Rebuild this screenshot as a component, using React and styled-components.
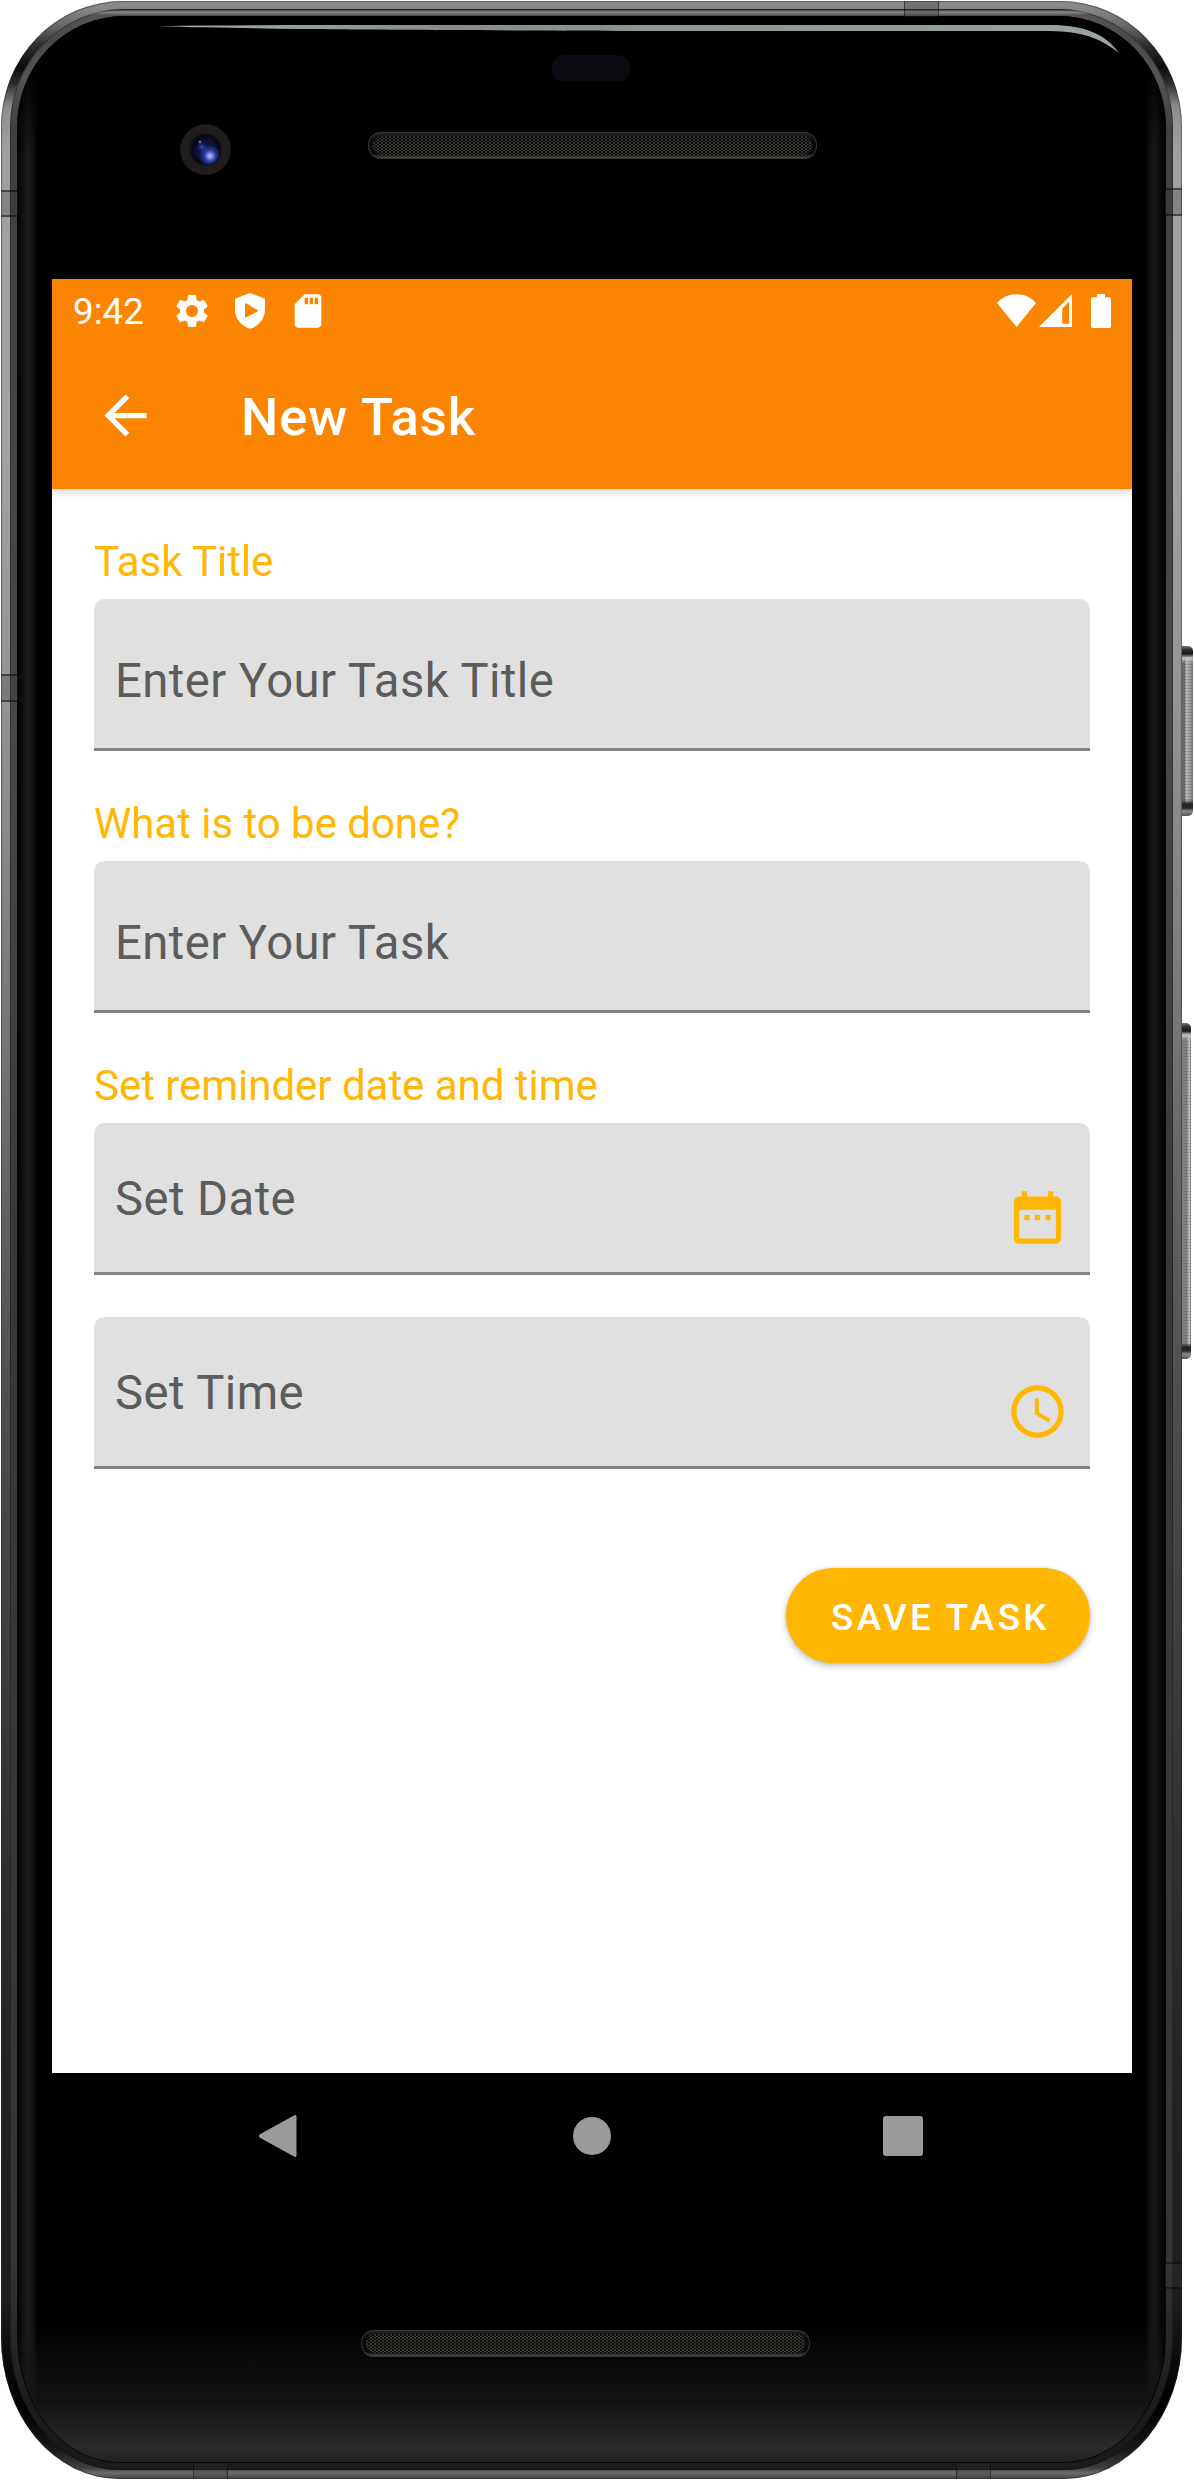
import React from "react";
import styled, { createGlobalStyle } from "styled-components";

const GlobalStyle = createGlobalStyle`
  html, body { margin: 0; padding: 0; background: #fff; }
  *, *::before, *::after { box-sizing: border-box; }
  body { font-family: Roboto, "Noto Sans", sans-serif; }
`;

const Stage = styled.div`
  position: relative;
  width: 1194px;
  height: 2480px;
  padding: 1px;
  overflow: hidden;
`;

/* Metal shell, lit from the top left */
const Shell = styled.div`
  position: relative;
  width: 1181px;
  height: 2478px;
  padding: 8px 9px 9px 9px;
  border-radius: 122px 122px 118px 118px / 126px 126px 142px 142px;
  background: linear-gradient(
    180deg,
    #8b8c8b 0,
    #858685 8px,
    #6a6a6a 24px,
    #2a2a2a 46px,
    #0c0c0c 66px,
    #2c2c2c 82px,
    #8e8e8e 106px,
    #a0a0a0 150px,
    #a3a3a3 420px,
    #949494 700px,
    #747474 1050px,
    #4d4d4d 1400px,
    #333 1800px,
    #222 2100px,
    #1d1d1d 2300px,
    #0a0a0a 2360px,
    #000 2410px,
    #1a1a1a 2450px,
    #404040 2467px,
    #6c6c6c 2472px,
    #4a4a4a 2477px
  );
  box-shadow: inset 0 0 1px 1px rgba(40, 44, 44, 0.5);
`;

/* Brushed inner rim between shell and glass */
const Rim = styled.div`
  height: 100%;
  padding: 7px 7px 7px 7px;
  border-radius: 114px 114px 109px 109px / 118px 118px 133px 133px;
  background: linear-gradient(
    180deg,
    #1c1c1c 0,
    #8a8a8a 3px,
    #555 6px,
    #4a4a4a 30px,
    #555 70px,
    #404040 120px,
    #484848 700px,
    #383838 1300px,
    #363636 1900px,
    #343434 2250px,
    #1c1c1c 2400px,
    #1b1b1b 2461px
  );
  box-shadow: inset 0 0 0 1px rgba(0, 0, 0, 0.3);
`;

const Glass = styled.div`
  display: flex;
  flex-direction: column;
  height: 100%;
  padding: 0 34px 0 35px;
  border-radius: 107px 107px 102px 102px / 111px 111px 126px 126px;
  background:
    linear-gradient(180deg, transparent 2310px, rgba(22, 22, 22, 0.9) 2385px, #2a2a2a 2432px, #222 2446px),
    linear-gradient(90deg, #000 0, #080808 3px, #1d1d1d 10px, #141414 15px, #000 21px, #000 calc(100% - 21px), #181818 calc(100% - 13px), #161616 calc(100% - 9px), #000 calc(100% - 2px));
  background-color: #000;
  box-shadow: inset 0 0 0 1px #050507;
  overflow: hidden;
`;

const TopBezel = styled.div`
  position: relative;
  height: 263px;
  flex: none;
  margin: 0 -35px;
  background: linear-gradient(180deg, #000 0 50px, transparent 140px);
`;

const BottomBezel = styled.div`
  display: flex;
  justify-content: center;
  padding-top: 131px;
  padding-right: 13px;
`;

const Highlight = styled.svg`
  position: absolute;
  left: 0;
  top: 0;
  pointer-events: none;
`;

const Sensor = styled.div`
  position: absolute;
  left: 535px;
  top: 39px;
  width: 78px;
  height: 27px;
  border-radius: 12px;
  background: #090b10;
`;

const Camera = styled.div`
  position: absolute;
  left: 163px;
  top: 108px;
  display: grid;
  place-items: center;
  width: 51px;
  height: 51px;
  border-radius: 50%;
  background: radial-gradient(circle, #100f11 0 15px, #201d1e 17px, #201e1e 24px, #141313 26px);
`;

const Lens = styled.div`
  width: 28px;
  height: 30px;
  border-radius: 50%;
  background:
    radial-gradient(circle at 18px 21px, #b3c2f5 0, #6c80dd 3px, rgba(50, 68, 190, 0.75) 6px, transparent 11px),
    radial-gradient(circle at 10px 12px, #3e5cc8 0, rgba(38, 60, 150, 0.6) 2px, transparent 5px),
    radial-gradient(circle at 8px 7px, #8ba0e8 0, transparent 2px),
    radial-gradient(circle, #10194c 0, #0c1239 9px, #05060f 15px);
`;

const Grille = styled.div`
  width: 449px;
  height: 27px;
  padding: 4px 5px;
  border-radius: 13px;
  background: linear-gradient(180deg, #272627, #0b0b0b 30%, #0b0b0b 80%, #575250);
  box-shadow: inset 0 0 0 1px #353333;
`;

const Mesh = styled.div`
  height: 100%;
  border-radius: 10px;
  background:
    radial-gradient(circle at 1px 1px, rgba(98, 92, 81, 0.65) 0 0.6px, transparent 1.1px) 0 0 / 4px 3px,
    radial-gradient(circle at 3px 2.5px, rgba(87, 82, 74, 0.65) 0 0.6px, transparent 1.1px) 0 0 / 4px 3px,
    #0b0a0a;
`;

const EarpieceSlot = styled.div`
  position: absolute;
  left: 351px;
  top: 116px;
`;

const Band = styled.span`
  position: absolute;
  ${(p) => p.$side}: 0;
  ${(p) => (p.$side === "left" || p.$side === "right"
    ? `top: ${p.$at}px; width: 17px; height: ${p.$size}px; border-width: 2px 0;`
    : `left: ${p.$at}px; height: 16px; width: ${p.$size}px; border-width: 0 1px;`)}
  border-style: solid;
  border-color: rgba(0, 0, 0, 0.45);
  background: rgba(50, 53, 53, 0.28);
`;

const SideKey = styled.div`
  position: absolute;
  left: 1181px;
  top: ${(p) => p.$top}px;
  width: ${(p) => p.$width}px;
  height: ${(p) => p.$height}px;
  border-radius: 0 5px 5px 0;
  background:
    linear-gradient(180deg, #777 0, #2a2a2a 4px, #1a1a1a 8px, #c6c6c6 12px, transparent 17px, transparent calc(100% - 16px), #222 calc(100% - 12px), #2a2a2a calc(100% - 8px), #8a8a8a calc(100% - 5px), #555 100%),
    repeating-linear-gradient(180deg, rgba(60, 60, 60, 0.22) 0 1px, transparent 1px 3px),
    linear-gradient(90deg, #6d6d6d 0, ${(p) => (p.$ribbed ? "#6b6b6b 4px, #bcbcbc 5px, #999 9px" : "#858585 2px, #7c7c7c 6px, #d2d2d2 8px")}, #777 100%);
`;

const Screen = styled.main`
  display: flex;
  flex-direction: column;
  flex: none;
  width: 1080px;
  height: 1920px;
  background: #fff;
`;

const Header = styled.header`
  height: 210px;
  color: #fff;
  background: #fb8500;
  box-shadow: 0 2px 10px rgba(0, 0, 0, 0.2);
  clip-path: inset(0 0 -20px 0);
`;

const StatusBar = styled.div`
  display: flex;
  align-items: center;
  height: 63px;
  padding: 0 21px 0 21px;
`;

const Clock = styled.time`
  width: 80px;
  font-size: 36.75px;
  line-height: 43px;
  padding-top: 1px;
`;

const Notifications = styled.div`
  display: flex;
  gap: 18px;
  margin-left: 19px;
`;

const SystemIcons = styled.div`
  display: flex;
  align-items: center;
  margin-left: auto;
  gap: 3px;
`;

const BatterySlot = styled.span`
  display: flex;
  margin-left: 16px;
`;

const Icon = styled.svg`
  display: block;
  flex: none;
  fill: currentColor;
`;

const Toolbar = styled.div`
  display: flex;
  align-items: center;
  height: 147px;
  padding-left: 42px;
`;

const BackButton = styled.button`
  display: flex;
  padding: 0;
  border: 0;
  color: inherit;
  background: none;
`;

const Title = styled.h1`
  margin: 3px 0 0 84px;
  font-size: 52.5px;
  font-weight: 500;
  line-height: 62px;
  letter-spacing: 0.018em;
  white-space: nowrap;
`;

const Form = styled.form`
  display: flex;
  flex: 1;
  flex-direction: column;
  padding: 48px 42px 0;
`;

const Group = styled.section`
  display: flex;
  flex-direction: column;
  margin-bottom: 48px;
`;

const Label = styled.label`
  margin-bottom: 13px;
  font-size: 42px;
  line-height: 49px;
  letter-spacing: -0.03px;
  color: #ffb703;
  white-space: nowrap;
`;

const Field = styled.div`
  display: flex;
  justify-content: space-between;
  height: 152px;
  padding: ${(p) => (p.$withIcon ? 48 : 54)}px 21px 0;
  border-bottom: 3px solid #838383;
  border-radius: 10.5px 10.5px 0 0;
  background: #e0e0e0;

  & + & {
    margin-top: 42px;
  }
`;

const Hint = styled.span`
  font-size: 47.25px;
  line-height: 56px;
  letter-spacing: 0.009375em;
  color: #5c5c5c;
  white-space: nowrap;
`;

const FieldIcon = styled.span`
  display: flex;
  margin-top: 15px;
  color: #ffb703;
`;

const SaveButton = styled.button`
  align-self: flex-end;
  width: 304px;
  height: 95px;
  margin-top: 51px;
  padding: 3px 0 0 5px;
  border: 0;
  border-radius: 48px;
  color: #fff;
  background: #ffb703;
  box-shadow: 0 3px 7px rgba(0, 0, 0, 0.24), 0 0 3px rgba(0, 0, 0, 0.12);
  font-family: inherit;
  font-size: 36.75px;
  font-weight: 500;
  line-height: 43px;
  letter-spacing: 0.092em;
  text-align: center;
  white-space: nowrap;
`;

const NavBar = styled.nav`
  display: flex;
  align-items: center;
  justify-content: space-between;
  height: 126px;
  padding: 0 209px 0 206px;
  color: #9a9a9a;
  background: #000;
`;

const GearIcon = () => (
  <Icon width="40" height="40" viewBox="0 0 24 24">
    <path d="M19.14 12.94c.04-.3.06-.61.06-.94 0-.32-.02-.64-.07-.94l2.03-1.58c.18-.14.23-.41.12-.61l-1.92-3.32c-.12-.22-.37-.29-.59-.22l-2.39.96c-.5-.38-1.03-.7-1.62-.94l-.36-2.54c-.04-.24-.24-.41-.48-.41h-3.84c-.24 0-.43.17-.47.41l-.36 2.54c-.59.24-1.13.57-1.62.94l-2.39-.96c-.22-.08-.47 0-.59.22L2.74 8.87c-.12.21-.08.47.12.61l2.03 1.58c-.05.3-.09.63-.09.94s.02.64.07.94l-2.03 1.58c-.18.14-.23.41-.12.61l1.92 3.32c.12.22.37.29.59.22l2.39-.96c.5.38 1.03.7 1.62.94l.36 2.54c.05.24.24.41.48.41h3.84c.24 0 .44-.17.47-.41l.36-2.54c.59-.24 1.13-.56 1.62-.94l2.39.96c.22.08.47 0 .59-.22l1.92-3.32c.12-.22.07-.47-.12-.61l-2.01-1.58zM12 15.6c-1.98 0-3.6-1.62-3.6-3.6s1.62-3.6 3.6-3.6 3.6 1.62 3.6 3.6-1.62 3.6-3.6 3.6z" />
  </Icon>
);

const ShieldPlayIcon = () => (
  <Icon width="40" height="40" viewBox="0 0 40 40">
    <path fillRule="evenodd" d="M20 2 34 7.2Q35 7.6 35 8.8V18C35 28 28.5 35.2 20 37.8 11.5 35.2 5 28 5 18V8.8Q5 7.6 6 7.2ZM15 13.2V25.4Q15 27 16.4 26.2L27.4 20.4Q28.6 19.7 27.4 19L16.4 12.4Q15 11.6 15 13.2Z" />
  </Icon>
);

const SdCardIcon = () => (
  <Icon width="40" height="40" viewBox="0 0 24 24">
    <path d="M18 2h-8L4.02 8 4 20c0 1.1.9 2 2 2h12c1.1 0 2-.9 2-2V4c0-1.1-.9-2-2-2zm-6 6h-2V4h2v4zm3 0h-2V4h2v4zm3 0h-2V4h2v4z" />
  </Icon>
);

const WifiIcon = () => (
  <Icon width="39" height="33" viewBox="0 0 39 33">
    <path d="M19.5 33 0 9C5 3.500 11.500.2 19.500.2S34 3.500 39 9Z" />
  </Icon>
);

const SignalIcon = () => (
  <Icon width="33" height="33" viewBox="0 0 33 33">
    <path fillRule="evenodd" d="M33 0V33H0ZM30.2 7.6 23.2 14.8V29.8H30.2Z" />
  </Icon>
);

const BatteryIcon = () => (
  <Icon width="20" height="34" viewBox="0 0 20 34">
    <path d="M6 0h8v3.200h4.300Q20 3.200 20 5v27.200q0 1.800-1.800 1.800H1.800Q0 34 0 32.200V5Q0 3.200 1.700 3.200H6Z" />
  </Icon>
);

const ArrowBackIcon = () => (
  <Icon width="63" height="63" viewBox="0 0 24 24">
    <path d="M20 11H7.83l5.590-5.590L12 4l-8 8 8 8 1.410-1.410L7.830 13H20v-2z" />
  </Icon>
);

const CalendarIcon = () => (
  <Icon width="63" height="63" viewBox="0 0 24 24">
    <path d="M9 11H7v2h2v-2zm4 0h-2v2h2v-2zm4 0h-2v2h2v-2zm2-7h-1V2h-2v2H8V2H6v2H5c-1.110 0-1.990.9-1.990 2L3 20c0 1.100.890 2 2 2h14c1.100 0 2-.9 2-2V6c0-1.100-.9-2-2-2zm0 16H5V9h14v11z" />
  </Icon>
);

const ClockIcon = () => (
  <Icon width="63" height="63" viewBox="0 0 24 24">
    <path d="M11.990 2C6.470 2 2 6.480 2 12s4.470 10 9.990 10C17.520 22 22 17.520 22 12S17.520 2 11.990 2zM12 20c-4.420 0-8-3.580-8-8s3.580-8 8-8 8 3.580 8 8-3.580 8-8 8zM12.500 7H11v6l5.250 3.150.750-1.230-4.500-2.670z" />
  </Icon>
);

const NavBackIcon = () => (
  <Icon width="40" height="44" viewBox="0 0 40 44">
    <path d="M36 1.400Q38.500.2 38.500 3V41Q38.500 43.800 36 42.600L2.400 24Q-.6 22 2.400 20Z" />
  </Icon>
);

const NavHomeIcon = () => (
  <Icon width="42" height="39" viewBox="0 0 42 39">
    <circle cx="22" cy="19" r="19" />
  </Icon>
);

const NavRecentsIcon = () => (
  <Icon width="40" height="40" viewBox="0 0 40 40">
    <rect width="40" height="40" rx="3" />
  </Icon>
);

const SpeakerGrille = () => (
  <Grille>
    <Mesh />
  </Grille>
);

export default function App() {
  return (
    <Stage>
      <GlobalStyle />
      <SideKey $top={646} $width={12} $height={170} $ribbed />
      <SideKey $top={1023} $width={10} $height={336} />
      <Shell>
        <Rim>
          <Glass>
            <TopBezel>
              <Sensor />
              <Camera>
                <Lens />
              </Camera>
              <EarpieceSlot>
                <SpeakerGrille />
              </EarpieceSlot>
            </TopBezel>
            <Screen>
              <Header>
                <StatusBar>
                  <Clock>9:42</Clock>
                  <Notifications>
                    <GearIcon />
                    <ShieldPlayIcon />
                    <SdCardIcon />
                  </Notifications>
                  <SystemIcons>
                    <WifiIcon />
                    <SignalIcon />
                    <BatterySlot>
                      <BatteryIcon />
                    </BatterySlot>
                  </SystemIcons>
                </StatusBar>
                <Toolbar>
                  <BackButton type="button">
                    <ArrowBackIcon />
                  </BackButton>
                  <Title>New Task</Title>
                </Toolbar>
              </Header>
              <Form>
                <Group>
                  <Label>Task Title</Label>
                  <Field>
                    <Hint>Enter Your Task Title</Hint>
                  </Field>
                </Group>
                <Group>
                  <Label>What is to be done?</Label>
                  <Field>
                    <Hint>Enter Your Task</Hint>
                  </Field>
                </Group>
                <Group>
                  <Label>Set reminder date and time</Label>
                  <Field $withIcon>
                    <Hint>Set Date</Hint>
                    <FieldIcon>
                      <CalendarIcon />
                    </FieldIcon>
                  </Field>
                  <Field $withIcon>
                    <Hint>Set Time</Hint>
                    <FieldIcon>
                      <ClockIcon />
                    </FieldIcon>
                  </Field>
                </Group>
                <SaveButton type="button">SAVE TASK</SaveButton>
              </Form>
              <NavBar>
                <NavBackIcon />
                <NavHomeIcon />
                <NavRecentsIcon />
              </NavBar>
            </Screen>
            <BottomBezel>
              <SpeakerGrille />
            </BottomBezel>
          </Glass>
        </Rim>
        <Band $side="left" $at={189} $size={27} />
        <Band $side="left" $at={673} $size={28} />
        <Band $side="right" $at={187} $size={28} />
        <Band $side="right" $at={2261} $size={27} />
        <Band $side="top" $at={903} $size={35} />
        <Band $side="bottom" $at={192} $size={35} />
        <Band $side="bottom" $at={955} $size={35} />
      </Shell>
      <Highlight width="1194" height="70" viewBox="0 0 1194 70">
        <defs>
          <linearGradient id="glint" x1="0" x2="1">
            <stop offset="0" stopColor="#9cb0b0" />
            <stop offset="0.3" stopColor="#868d90" />
            <stop offset="1" stopColor="#9aa3a4" />
          </linearGradient>
        </defs>
        <path
          fill="url(#glint)"
          d="M158 26.200 C240 25 330 25 420 25 H1050 C1085 25 1105 34 1119 53 C1100 38 1082 31.500 1050 31 H700 C500 30.500 390 30 300 29 C250 28 200 27.500 158 26.200Z"
        />
      </Highlight>
    </Stage>
  );
}
